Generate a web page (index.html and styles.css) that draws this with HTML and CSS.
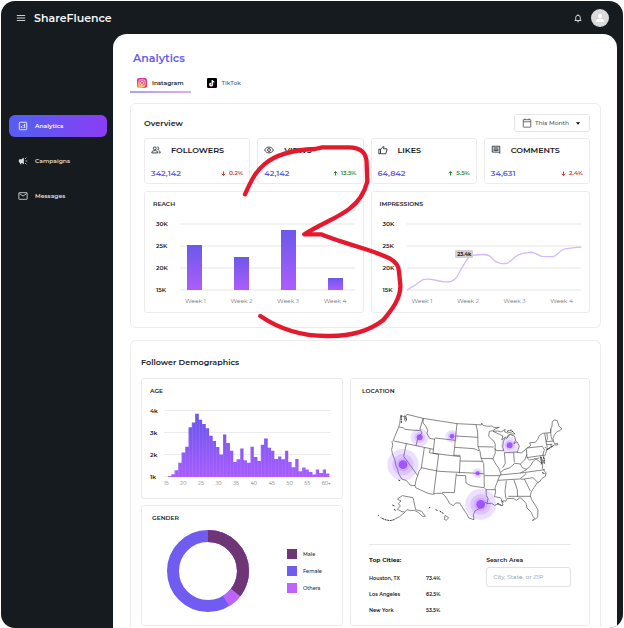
FILE: index.html
```html
<!DOCTYPE html>
<html lang="en">
<head>
<meta charset="utf-8">
<meta name="viewport" content="width=device-width, initial-scale=1">
<title>ShareFluence – Analytics</title>
<link rel="stylesheet" href="styles.css">
</head>
<body>
<div class="shell">
  <header class="topbar">
    <button class="icon-button" aria-label="Menu"><svg class="icon" viewBox="0 0 24 24"><path d="M2 6h20M2 12h20M2 18h20"/></svg></button>
    <span class="brand">ShareFluence</span>
    <button class="icon-button bell" aria-label="Notifications"><svg class="icon" viewBox="0 0 24 24"><path d="M4 18h16M6.500 18v-7a5.500 5.500 0 0 1 11 0v7M12 3v2M10 21h4"/></svg></button>
    <button class="avatar" aria-label="Account"><svg viewBox="0 0 24 24"><circle cx="12" cy="8" r="4"/><path d="M4 20v-2.500c0-3 5-4.500 8-4.500s8 1.500 8 4.500V20z"/></svg></button>
  </header>

  <nav class="sidebar" aria-label="Sections">
    <a class="nav-item active" href="#analytics"><svg class="icon" viewBox="0 0 24 24"><rect x="3" y="3" width="18" height="18" rx="2"/><path d="M8 17v-5M12 17v-3M12 11.500v-2M16 17V7"/></svg>Analytics</a>
    <a class="nav-item" href="#campaigns"><svg class="icon" viewBox="0 0 24 24"><path class="solid" d="M2 10c0-1 1-2 2-2h4l6-4v16l-6-4v4H5v-4H4c-1 0-2-1-2-2z"/><path d="M18 12h4M17 7l3-3M17 17l3 3"/></svg>Campaigns</a>
    <a class="nav-item" href="#messages"><svg class="icon" viewBox="0 0 24 24"><rect x="2" y="4" width="20" height="16" rx="1"/><path d="M3 6l9 6 9-6"/></svg>Messages</a>
  </nav>

  <main class="content" id="analytics">
    <h1>Analytics</h1>
    <div class="tabs">
      <a class="tab selected" href="#instagram">
        <svg class="logo" viewBox="0 0 24 24"><defs><radialGradient id="ig" cx=".3" cy="1.05" r="1.1"><stop offset="0" stop-color="#ffd45c"/><stop offset=".35" stop-color="#fa7a3b"/><stop offset=".65" stop-color="#ed3565"/><stop offset="1" stop-color="#d13cb4"/></radialGradient></defs><rect width="24" height="24" rx="5" fill="url(#ig)"/><g fill="none" stroke="#fff" stroke-width="1.800"><rect x="4.500" y="4.500" width="15" height="15" rx="4"/><circle cx="12" cy="12" r="3.800"/></g><circle cx="16.500" cy="7.500" r="1" fill="#fff"/></svg>Instagram</a>
      <a class="tab" href="#tiktok">
        <svg class="logo" viewBox="0 0 24 24"><rect width="24" height="24" rx="3"/><g fill="none" stroke-width="2.600"><path stroke="#25f4ee" d="M12.200 5v10.300a3 3 0 1 1-3-3M12.200 5c.3 2.500 2 4 4.500 4.200"/><path stroke="#fe2c55" d="M13.800 6v10.300a3 3 0 1 1-3-3M13.800 6c.3 2.500 2 4 4.500 4.200"/><path stroke="#fff" d="M13 5.500v10.300a3 3 0 1 1-3-3M13 5.500c.3 2.500 2 4 4.500 4.200"/></g></svg>TikTok</a>
    </div>

    <section class="panel overview">
      <div class="panel-head">
        <h2>Overview</h2>
        <label class="period"><svg class="icon" viewBox="0 0 24 24"><rect x="3" y="4" width="18" height="18" rx="1"/><path d="M3 9h18M7 1v4M17 1v4"/></svg>
          <select aria-label="Period"><option>This Month</option><option>Last Month</option></select>
          <svg class="caret" viewBox="0 0 10 6"><path d="M0 0h10L5 6z"/></svg></label>
      </div>
      <div class="stats">
        <article class="card stat"><h3><svg class="icon" viewBox="0 0 24 24"><circle cx="9" cy="8" r="3.500"/><path d="M2 19v-2c0-2 4-3.500 7-3.500s7 1.500 7 3.500v2zM15 4.500a3.500 3.500 0 0 1 0 7M18 14c2.500.7 4 1.500 4 3v2h-3"/></svg>FOLLOWERS</h3><p><strong>342,142</strong><span class="down"><svg class="arrow" viewBox="0 0 10 10"><path d="M5 1v8M1.500 5.500L5 9l3.500-3.500"/></svg>0.2%</span></p></article>
        <article class="card stat"><h3><svg class="icon" viewBox="0 0 24 24"><path d="M1.500 12C4 7 8 5 12 5s8 2 10.500 7c-2.500 5-6.500 7-10.500 7S4 17 1.500 12z"/><circle cx="12" cy="12" r="3.500"/></svg>VIEWS</h3><p><strong>42,142</strong><span class="up"><svg class="arrow" viewBox="0 0 10 10"><path d="M5 9V1M1.500 4.500L5 1l3.500 3.500"/></svg>13.5%</span></p></article>
        <article class="card stat"><h3><svg class="icon" viewBox="0 0 24 24"><path d="M2 10h4v11H2zM6 11l7-8 1.500 1.500L13 9h8.500v3L18.500 21H8l-2-1"/></svg>LIKES</h3><p><strong>64,842</strong><span class="up"><svg class="arrow" viewBox="0 0 10 10"><path d="M5 9V1M1.500 4.500L5 1l3.500 3.500"/></svg>5.5%</span></p></article>
        <article class="card stat"><h3><svg class="icon" viewBox="0 0 24 24"><path d="M3 3h18v17l-3-3H3zM6 7h12M6 10h12M6 13h12"/></svg>COMMENTS</h3><p><strong>34,631</strong><span class="down"><svg class="arrow" viewBox="0 0 10 10"><path d="M5 1v8M1.500 5.500L5 9l3.500-3.500"/></svg>2.4%</span></p></article>
      </div>
      <div class="trends">
        <article class="card chart">
          <h3>REACH</h3>
          <div class="graph">
            <div class="y-axis"><span>30K</span><span>25K</span><span>20K</span><span>15K</span></div>
            <div class="plot bars"><i style="height:67%"></i><i style="height:49%"></i><i style="height:89%"></i><i style="height:18%"></i></div>
            <div class="x-axis weeks"><span>Week 1</span><span>Week 2</span><span>Week 3</span><span>Week 4</span></div>
          </div>
        </article>
        <article class="card chart">
          <h3>IMPRESSIONS</h3>
          <div class="graph">
            <div class="y-axis"><span>30K</span><span>25K</span><span>20K</span><span>15K</span></div>
            <div class="plot">
              <svg class="plot-svg" viewBox="137 117 530 197" preserveAspectRatio="none"><path class="trend" d="M137 314L163 299C177 289 180 282 195 282C220 281 232 290 255 290C287 291 290 270 305 247C320 224 325 211 345 211C367 209 380 208 390 215C400 224 402 233 416 234C449 244 452 223 475 211C490 203 504 205 515 203C530 204 535 214 548 215L578 216C592 216 600 196 618 193C635 190 650 189 667 188"/></svg>
              <span class="tip">23.4k</span>
            </div>
            <div class="x-axis weeks"><span>Week 1</span><span>Week 2</span><span>Week 3</span><span>Week 4</span></div>
          </div>
        </article>
      </div>
      <svg class="markup" viewBox="0 0 525 630" aria-hidden="true"><path d="M30 178C45 145 60 110 88 88C120 60 170 45 240 42L262 37H340C380 37 396 55 395 90L397 140C385 185 365 205 345 220C310 248 260 265 208 298H258C300 315 350 330 390 342C450 362 492 375 492 410L496 450C498 490 470 525 445 555C400 590 350 603 285 603C200 605 130 580 76 543"/></svg>
    </section>

    <section class="panel demographics">
      <h2>Follower Demographics</h2>
      <div class="demo-grid">
        <article class="card chart age">
          <h3>AGE</h3>
          <div class="graph">
            <div class="y-axis"><span>4k</span><span>3k</span><span>2k</span><span>1k</span></div>
            <div class="plot">
              <svg class="plot-svg" viewBox="99 197 504 197" preserveAspectRatio="none"><defs><linearGradient id="hist" gradientUnits="userSpaceOnUse" x1="0" y1="208" x2="0" y2="394"><stop offset="0" stop-color="#6556ec"/><stop offset="1" stop-color="#a95cff"/></linearGradient><pattern id="gaps" width="10.400" height="200" x="111" patternUnits="userSpaceOnUse"><path d="M0 0V200" stroke="#fff" stroke-width="2" opacity=".25"/></pattern></defs><path id="histogram" fill="url(#hist)" d="M111 394V391H121V386H131V374H142V352H152V322H163V305H173V248H183V234H193V208H204V226H214V238H225V251H235V273H246V288H256V306H266V328H277V269H287V294H298V317H308V350H318V342H329V310H339V345H349V352H360V305H370V335H381V347H391V299H401V281H412V308H422V317H432V341H443V334H453V342H464V317H474V350H484V365H495V341H505V377H516V366H526V372H536V379H547V387H557V372H567V382H578V372H588V384H598V394z"/><path fill="url(#gaps)" d="M111 394V391H121V386H131V374H142V352H152V322H163V305H173V248H183V234H193V208H204V226H214V238H225V251H235V273H246V288H256V306H266V328H277V269H287V294H298V317H308V350H318V342H329V310H339V345H349V352H360V305H370V335H381V347H391V299H401V281H412V308H422V317H432V341H443V334H453V342H464V317H474V350H484V365H495V341H505V377H516V366H526V372H536V379H547V387H557V372H567V382H578V372H588V384H598V394z"/></svg>
            </div>
            <div class="x-axis"><span>15</span><span>20</span><span>25</span><span>30</span><span>35</span><span>40</span><span>45</span><span>50</span><span>55</span><span>60+</span></div>
          </div>
        </article>

        <article class="card gender">
          <h3>GENDER</h3>
          <div class="gender-body">
            <svg class="donut" viewBox="0 0 82 82"><g fill="none" stroke-width="12" transform="rotate(-90 41 41)"><circle cx="41" cy="41" r="35" stroke="#705cf0"/><circle cx="41" cy="41" r="35" stroke="#bd63ff" pathLength="360" stroke-dasharray="149 211"/><circle cx="41" cy="41" r="35" stroke="#6e3674" pathLength="360" stroke-dasharray="128 232"/></g></svg>
            <ul class="legend"><li class="male">Male</li><li class="female">Female</li><li class="others">Others</li></ul>
          </div>
        </article>

        <article class="card location">
          <h3>LOCATION</h3>
          <svg class="map" viewBox="80 105 570 340" role="img" aria-label="Followers by location in the United States">
            <g class="borders">
              <path d="M151 118L163 123L162 132L167 136L168 128L166 120L170 115L218 127L320 143L382 146L393 147L394 141L398 148L412 151L425 150L430 154L447 154L435 159L428 164L417 166L415 180L420 186L431 196L435 206L434 220L440 224H461L457 214L459 196L466 183L454 192L458 180L448 175L428 166L442 165L452 168L465 160L462 167L473 171L487 167L494 174L481 174L473 178L468 188L475 180L480 176L492 180L496 192L490 204L500 197L507 210L504 220L500 229L513 231L528 218L541 209L538 200L555 199L562 190L567 179L577 172L600 170L602 158L605 150L606 136L612 132L621 134L626 151L635 158L628 164L620 167L612 177L608 187L609 196L614 204L622 202L622 207L612 207L600 214L590 221L586 232L583 240L577 237L582 250L578 262L573 251L570 242L573 257L577 267L576 277L587 291L585 301L575 307L569 316L560 321L551 335L543 347L540 359L544 371L555 388L563 402L562 423L555 430L548 421L543 409L530 396L527 382L518 372L509 365L498 373L489 367L470 368L466 376L461 374L455 378L458 387L452 389L445 382L433 388L424 382L410 383L405 378L398 389L386 398L374 405L369 416L371 431L355 426L350 415L339 399L328 381L316 381L309 389L298 383L291 370L283 359L275 352L258 352L246 355L230 351L196 335L194 329L180 328L169 314L154 309L145 293L142 281L137 270L134 254L132 248L126 233L124 220L127 208L125 197L129 193L134 180L143 158L148 145Z"/>
              <path d="M146 153L158 155L164 160L182 162L210 164M218 127L209 159L215 171L203 184L197 209M130 195L197 209L250 220M168 203L160 241L202 299L198 309L194 329M222 215L213 276L206 286L202 299M219 127L218 141L226 150L232 163L230 172L238 187L253 190M254 186L315 193M253 187L248 232M320 143L316 180L313 213L310 240M248 232L330 242L327 292M240 219L237 230L265 235L250 354M212 275L266 286L400 293M318 292L312 350L275 349M317 180L383 184M313 214L371 218L386 224M377 146L382 168L383 212M311 238H330M330 255L396 256M383 212L430 213M383 212L389 226L392 246L400 263L401 293L402 333M392 247L428 248M434 217L435 230L428 249L438 267L445 276L452 294L446 304L440 320L434 336L436 348L432 362L450 365L456 374M318 298L346 299L347 321L361 329L378 332L402 335L407 341L408 358L413 368L410 383M402 299H448M407 341H435M462 229L465 262L457 275M463 230L502 228M490 230L492 259M451 289L461 281L479 275L493 262L510 264L523 252L530 235M448 297L511 291L584 281M442 313L508 309M468 314L464 347L467 368M491 312L501 342L502 362M474 361L541 361M511 310L522 309L540 345M508 309L520 300L528 291M522 309L548 305L564 321M528 218L530 245L577 238M530 216L576 211L582 221L578 237M510 264L516 275L528 280L540 271L547 258L556 249L567 246M530 245L537 252L549 250L554 247L568 257L577 264M510 291L530 280M583 172L587 197L591 214M583 214L596 219M590 172L591 188L588 197L611 195M601 158L602 181L606 193M588 206L606 205M602 204V212"/>
              <path d="M141 369L156 359L188 365L196 401L214 406L225 421L216 421L205 410L192 403L180 404L170 401L161 411L148 422L132 430M163 408L155 407L141 400L150 390L144 383L152 375L142 370"/>
              <path class="rough" d="M132 431L119 434L104 431L91 425M83 417L86 419M131 400L137 404M126 387L134 391M235 396L240 394M256 401L263 404M268 405L275 410L281 413M144 312L150 315M153 119V142M163 119L169 132M572 242L576 254L572 266M580 243L583 263M588 222L608 210M575 290L585 293M546 433L554 430M440 383L456 389M452 374L460 379M470 166L483 162L488 168"/>
              <path d="M284 418L295 425L288 433L282 430Z"/>
            </g>
            <g class="spots">
              <circle cx="158" cy="266" r="47"/><circle cx="158" cy="266" r="32"/><circle cx="158" cy="266" r="20"/><circle class="core" cx="158" cy="266" r="13"/>
              <circle cx="391" cy="385" r="46"/><circle cx="391" cy="385" r="31"/><circle cx="391" cy="385" r="20"/><circle class="core" cx="391" cy="385" r="13"/>
              <circle cx="208" cy="184" r="27"/><circle cx="208" cy="184" r="16"/><circle class="core" cx="208" cy="184" r="9"/>
              <circle cx="305" cy="181" r="19"/><circle cx="305" cy="181" r="12"/><circle class="core" cx="305" cy="181" r="7"/>
              <circle cx="478" cy="208" r="26"/><circle cx="478" cy="208" r="15"/><circle class="core" cx="478" cy="208" r="9"/>
              <circle cx="382" cy="292" r="15"/><circle cx="382" cy="292" r="9"/><circle class="core" cx="382" cy="292" r="6"/>
            </g>
          </svg>
          <div class="places">
            <table>
              <caption>Top Cities:</caption>
              <tbody><tr><th scope="row">Houston, TX</th><td>73.4%</td></tr><tr><th scope="row">Los Angeles</th><td>62.5%</td></tr><tr><th scope="row">New York</th><td>53.5%</td></tr></tbody>
            </table>
            <div class="search"><label for="area">Search Area</label><input id="area" type="text" placeholder="City, State, or ZIP"></div>
          </div>
        </article>
      </div>
    </section>
  </main>
</div>
</body>
</html>
```
FILE: styles.css
```css
* { box-sizing: border-box; }

body {
  margin: 0;
  background: #fff;
  color: #182026;
  font-family: Montserrat, Inter, "Liberation Sans", sans-serif;
  font-size: 6px;
  line-height: 8px;
}

h1, h2, h3, p, ul { margin: 0; padding: 0; }
a { color: inherit; text-decoration: none; }
button { border: 0; padding: 0; background: none; color: inherit; }
input, select { font: inherit; color: inherit; }

.shell {
  display: grid;
  grid-template-columns: 112px 1fr;
  grid-template-rows: 33px 1fr;
  min-height: calc(100vh - 1px);
  margin: 1px 1px 0;
  padding-right: 6px;
  overflow: hidden;
  border-radius: 14px;
  background: #151b1e;
}

.icon {
  flex: none;
  width: 10px;
  height: 10px;
  fill: none;
  stroke: currentColor;
  stroke-width: 2;
}
.icon .solid { fill: currentColor; stroke: none; }

.topbar {
  grid-column: 1 / -1;
  display: flex;
  align-items: center;
  padding: 0 8px 0 15px;
  color: #f4f4f4;
}
.icon-button, .avatar { display: flex; }
.brand { margin-left: 8px; font-size: 11px; font-weight: 600; line-height: 16px; }
.bell { margin-left: auto; }
.avatar {
  width: 18px;
  height: 18px;
  margin-left: 8px;
  padding: 3px;
  border-radius: 50%;
  background: #dadada;
}
.avatar svg { width: 12px; height: 12px; fill: #fff; }

.sidebar {
  display: flex;
  flex-direction: column;
  gap: 13px;
  padding: 81px 6px 0 8px;
}
.nav-item {
  display: flex;
  align-items: center;
  gap: 7px;
  height: 22px;
  padding: 0 9px;
  border-radius: 6px;
  color: #dcdddd;
  font-weight: 600;
}
.nav-item.active {
  background: linear-gradient(90deg, #5a5bf0 20%, #8b3cf5);
  color: #fff;
}

.content {
  min-width: 0;
  padding: 16px 16px 0 17px;
  border-radius: 14px 14px 0 0;
  background: #fff;
}
h1 { padding-left: 3px; color: #655ced; font-size: 11px; font-weight: 600; line-height: 16px; }

.tabs { display: flex; gap: 9px; margin-top: 9px; }
.tab {
  display: flex;
  align-items: center;
  gap: 5px;
  height: 18px;
  padding: 0 7px;
  border-bottom: 2px solid transparent;
  color: #555;
  font-weight: 500;
}
.tab.selected {
  border-image: linear-gradient(90deg, #aaa2f7, #d7adff) 1;
  color: #182026;
  font-weight: 600;
}
.logo { width: 10px; height: 10px; }

.panel {
  position: relative;
  margin-top: 10px;
  border: 1px solid #ececec;
  border-radius: 6px;
}
h2 { font-size: 8px; font-weight: 600; line-height: 12px; }
h3 { font-size: 6px; font-weight: 600; line-height: 8px; }
.card { min-width: 0; border: 1px solid #ececec; border-radius: 3px; }

.overview { padding: 10px 10px 14px 13px; }
.panel-head { display: flex; align-items: center; justify-content: space-between; }
.period {
  display: flex;
  align-items: center;
  height: 18px;
  width: 76px;
  padding: 0 9px 0 7px;
  gap: 3px;
  border: 1px solid #e6e6e6;
  border-radius: 3px;
  color: #555;
}
.period select {
  flex: 1;
  min-width: 0;
  padding: 0;
  border: 0;
  background: none;
  appearance: none;
  font-weight: 500;
}
.caret { width: 4px; height: 3px; }

.stats { display: grid; grid-template-columns: repeat(4, 1fr); gap: 7px; margin-top: 6px; }
.stat { height: 46px; padding: 5px 6px; }
.stat h3 { display: flex; align-items: center; gap: 10px; font-size: 8px; line-height: 12px; }
.stat p { display: flex; align-items: center; justify-content: space-between; margin-top: 11px; line-height: 12px; }
.stat strong { color: #655ced; font-size: 8px; font-weight: 600; }
.stat span { display: flex; align-items: center; gap: 3px; font-weight: 600; }
.arrow { width: 5px; height: 5px; fill: none; stroke: currentColor; stroke-width: 2; }
.up { color: #268a3c; }
.down { color: #c43d40; }

.trends { display: grid; grid-template-columns: 1fr 1fr; gap: 7px; margin-top: 7px; }
.chart { height: 122px; padding: 8px; }
.graph {
  display: grid;
  grid-template-columns: 27px 1fr;
  grid-template-rows: 68px auto;
  margin-top: 15px;
}
.y-axis {
  display: flex;
  flex-direction: column;
  justify-content: space-between;
  margin: -3px 0;
  padding-left: 3px;
  font-weight: 600;
}
.plot {
  position: relative;
  height: 68px;
  background: repeating-linear-gradient(#f2f2f2 0 2px, transparent 2px 22px);
}
.bars {
  display: flex;
  align-items: flex-end;
  justify-content: space-between;
  padding: 0 11px 1px 7px;
}
.bars i { width: 15px; background: linear-gradient(#6b59eb, #ad5dfb); }
.x-axis {
  grid-column: 2;
  display: flex;
  justify-content: space-between;
  margin-top: 6px;
  color: #777;
}
.weeks { padding: 0 8px 0 5px; }
.plot-svg { display: block; width: 100%; height: 67px; overflow: visible; }
.trend { fill: none; stroke: #d4b9ff; stroke-width: 4; }
.tip {
  position: absolute;
  left: 28%;
  top: 27px;
  padding: 0 2px;
  border-radius: 1px;
  background: #d2d2d2;
  font-size: 5px;
  font-weight: 700;
}
.markup {
  position: absolute;
  top: 31px;
  left: 104px;
  width: 175px;
  height: 210px;
  fill: none;
  stroke: #e5192e;
  stroke-width: 13;
  stroke-linecap: round;
  stroke-linejoin: round;
  pointer-events: none;
}

.demographics {
  margin-top: 12px;
  padding: 15px 10px 1px;
  border-bottom: 0;
  border-radius: 6px 6px 0 0;
}
.demo-grid {
  display: grid;
  grid-template-columns: 202fr 240fr;
  grid-template-rows: 121px 121px;
  gap: 6px 7px;
  margin-top: 10px;
}
.age { height: auto; }
.age .graph { grid-template-columns: 14px 1fr; padding-right: 3px; }
.age .y-axis { padding-left: 0; }
.age .x-axis { margin-top: 1px; font-size: 5px; }
.age .plot { background: repeating-linear-gradient(#ececec 0 1px, transparent 1px 22px); }

.gender { padding: 8px 10px; }
.gender-body { display: flex; align-items: center; justify-content: space-between; margin-top: 8px; padding: 0 8px 0 15px; }
.donut { width: 82px; height: 82px; }
.legend { display: grid; gap: 7px; width: 37px; list-style: none; font-size: 5px; font-weight: 500; }
.legend li { display: flex; align-items: center; gap: 6px; line-height: 10px; }
.legend li::before { content: ""; width: 10px; height: 10px; background: currentcolor; }
.legend .male::before { background: #6e3674; }
.legend .female::before { background: #705cf0; }
.legend .others::before { background: #bd63ff; }

.location { grid-column: 2; grid-row: 1 / 3; padding: 8px 18px 8px 18px; }
.location h3 { margin-left: -7px; }
.map { display: block; width: 190px; max-width: 100%; margin: 16px 0 0 8px; }
.borders { fill: none; stroke: #4c4c4c; stroke-width: 2; stroke-linejoin: round; }
.borders .rough { stroke: #333; stroke-width: 3; stroke-dasharray: 6 2; }
.spots { fill: #8c35ff; fill-opacity: .16; }
.spots .core { fill: #9745ff; fill-opacity: .85; }

.places {
  display: flex;
  justify-content: space-between;
  margin-top: 20px;
  padding-top: 11px;
  border-top: 1px solid #e8e8e8;
}
table { align-self: flex-start; border-collapse: collapse; }
caption { padding-bottom: 6px; text-align: left; font-size: 6px; font-weight: 700; }
th, td { height: 16px; padding: 0; text-align: left; font-size: 5px; font-weight: 600; }
th { width: 57px; }
.search { display: flex; flex-direction: column; width: 42%; font-weight: 600; }
.search input {
  width: 100%;
  height: 20px;
  margin-top: 3px;
  padding: 0 6px;
  border: 1px solid #e2e2e2;
  border-radius: 3px;
  font-weight: 400;
}
.search input::placeholder { color: #8a8a8a; }
```
